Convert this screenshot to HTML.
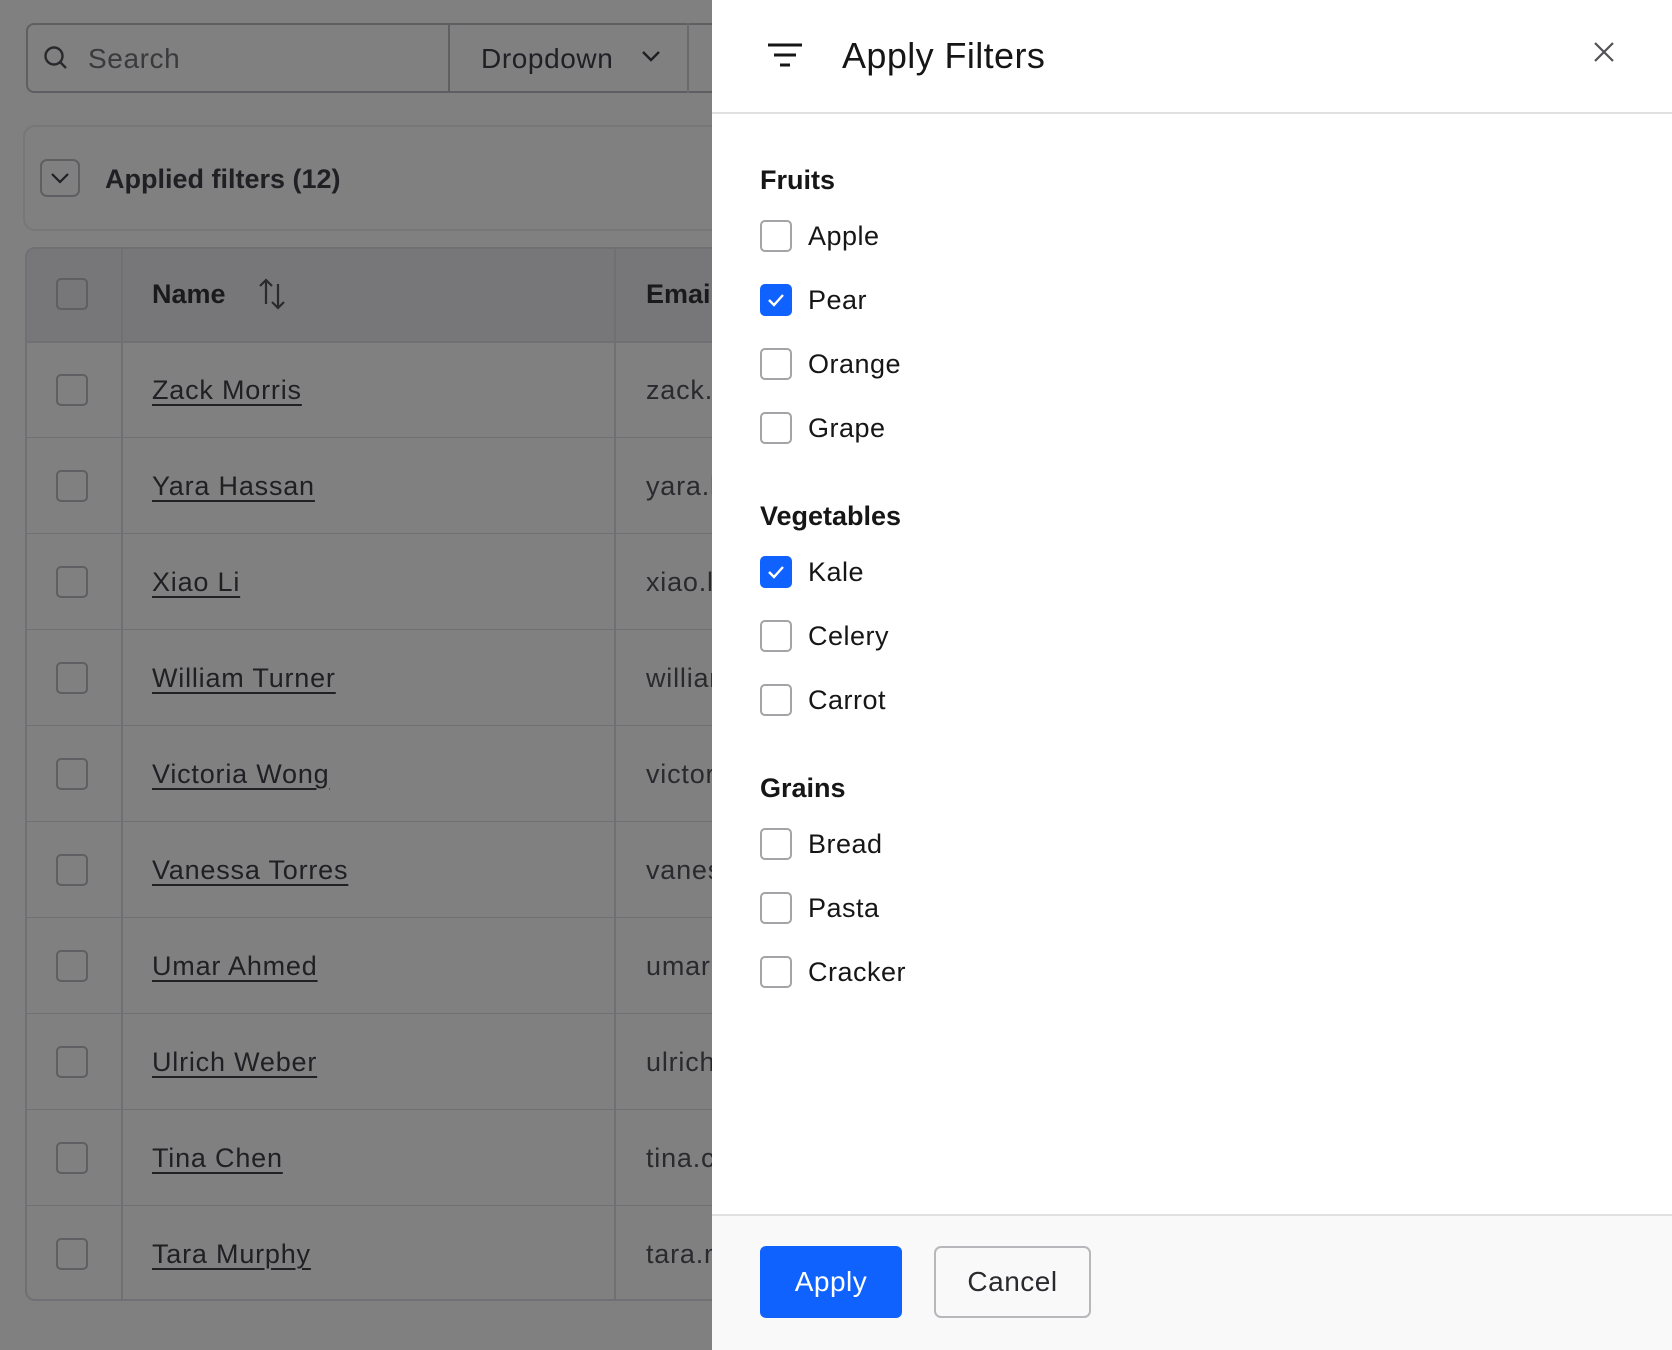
<!DOCTYPE html>
<html><head><meta charset="utf-8"><style>
*{box-sizing:border-box;margin:0;padding:0}
body{width:1672px;height:1350px;overflow:hidden;background:#808080;font-family:"Liberation Sans",sans-serif;position:relative;color:#1f1f24}
.abs{position:absolute}
.cb{position:absolute;width:32px;height:32px;border:2px solid #5f5f63;border-radius:5px}
.name{position:absolute;left:152px;font-size:27px;letter-spacing:0.8px;color:#1f1f24;text-decoration:underline;text-underline-offset:5px;text-decoration-thickness:2px}
.em{position:absolute;left:646px;font-size:27px;letter-spacing:0.8px;color:#2a2a2e}
.row{position:absolute;left:26px;width:700px;height:1px;background:#707074}
.panel{position:absolute;left:712px;top:0;width:960px;height:1350px;background:#fff}
.pcb{position:absolute;left:48px;width:32px;height:32px;border:2px solid #a3a3a8;border-radius:5px;background:#fff}
.pcb.on{background:#0f62fe;border-color:#0f62fe}
.lab{position:absolute;left:96px;font-size:27px;letter-spacing:0.5px;color:#161616}
.h{position:absolute;left:48px;font-size:27px;font-weight:bold;color:#161616}
</style></head><body>
<div class="abs" style="left:26px;top:23px;width:720px;height:70px;border:2px solid #5f5f63;border-radius:8px"></div>
<div class="abs" style="left:448px;top:23px;width:2px;height:70px;background:#5f5f63"></div>
<div class="abs" style="left:687px;top:23px;width:2px;height:70px;background:#6a6a6e"></div>
<svg class="abs" style="left:42px;top:44px" width="28" height="28" viewBox="0 0 28 28"><circle cx="12" cy="12" r="8.5" fill="none" stroke="#2a2a2e" stroke-width="2.4"/><path d="M18 18l6 6" stroke="#2a2a2e" stroke-width="2.4"/></svg>
<div class="abs" style="left:88px;top:43px;font-size:28px;letter-spacing:0.6px;color:#3a3a3e">Search</div>
<div class="abs" style="left:481px;top:43px;font-size:28px;letter-spacing:0.6px;color:#1f1f24">Dropdown</div>
<svg class="abs" style="left:640px;top:48px" width="22" height="16" viewBox="0 0 22 16"><path d="M3 4l8 8 8-8" fill="none" stroke="#1f1f24" stroke-width="2.4"/></svg>
<div class="abs" style="left:23px;top:125px;width:720px;height:106px;border:2px solid #777;border-radius:12px"></div>
<div class="abs" style="left:40px;top:159px;width:40px;height:38px;border:2px solid #5f5f63;border-radius:7px"></div>
<svg class="abs" style="left:48px;top:168px" width="24" height="20" viewBox="0 0 24 20"><path d="M4 6l8 8 8-8" fill="none" stroke="#1f1f24" stroke-width="2.2"/></svg>
<div class="abs" style="left:105px;top:164px;font-size:27px;font-weight:bold;color:#1f1f24">Applied filters (12)</div>
<div class="abs" style="left:25px;top:247px;width:720px;height:1054px;border:2px solid #707074;border-radius:10px"></div>
<div class="abs" style="left:27px;top:249px;width:700px;height:92px;background:#777779;border-radius:8px 0 0 0"></div>
<div class="abs" style="left:121px;top:247px;width:2px;height:1054px;background:#707074"></div>
<div class="abs" style="left:614px;top:247px;width:2px;height:1054px;background:#707074"></div>
<div class="row" style="top:341px;height:2px"></div>
<div class="cb" style="left:56px;top:278px"></div>
<div class="abs" style="left:152px;top:279px;font-size:27px;font-weight:bold;color:#1a1a1e">Name</div>
<svg class="abs" style="left:256px;top:276px" width="34" height="36" viewBox="0 0 34 36"><path d="M10 28V4M4 10l6-6 6 6M22 8v24M16 26l6 6 6-6" fill="none" stroke="#2a2a2e" stroke-width="2.2"/></svg>
<div class="abs" style="left:646px;top:279px;font-size:27px;font-weight:bold;color:#1a1a1e">Email</div>

<div class="cb" style="left:56px;top:374px"></div><div class="name" style="top:375px">Zack Morris</div><div class="em" style="top:375px">zack.morris</div><div class="row" style="top:437px"></div>
<div class="cb" style="left:56px;top:470px"></div><div class="name" style="top:471px">Yara Hassan</div><div class="em" style="top:471px">yara.hassan</div><div class="row" style="top:533px"></div>
<div class="cb" style="left:56px;top:566px"></div><div class="name" style="top:567px">Xiao Li</div><div class="em" style="top:567px">xiao.li</div><div class="row" style="top:629px"></div>
<div class="cb" style="left:56px;top:662px"></div><div class="name" style="top:663px">William Turner</div><div class="em" style="top:663px">william</div><div class="row" style="top:725px"></div>
<div class="cb" style="left:56px;top:758px"></div><div class="name" style="top:759px">Victoria Wong</div><div class="em" style="top:759px">victoria</div><div class="row" style="top:821px"></div>
<div class="cb" style="left:56px;top:854px"></div><div class="name" style="top:855px">Vanessa Torres</div><div class="em" style="top:855px">vanessa</div><div class="row" style="top:917px"></div>
<div class="cb" style="left:56px;top:950px"></div><div class="name" style="top:951px">Umar Ahmed</div><div class="em" style="top:951px">umar</div><div class="row" style="top:1013px"></div>
<div class="cb" style="left:56px;top:1046px"></div><div class="name" style="top:1047px">Ulrich Weber</div><div class="em" style="top:1047px">ulrich</div><div class="row" style="top:1109px"></div>
<div class="cb" style="left:56px;top:1142px"></div><div class="name" style="top:1143px">Tina Chen</div><div class="em" style="top:1143px">tina.chen</div><div class="row" style="top:1205px"></div>
<div class="cb" style="left:56px;top:1238px"></div><div class="name" style="top:1239px">Tara Murphy</div><div class="em" style="top:1239px">tara.murphy</div>

<div class="panel">
 <svg class="abs" style="left:54px;top:42px" width="38" height="28" viewBox="0 0 38 28"><path d="M2 3h34M8 13h22M14 23h10" stroke="#161616" stroke-width="3"/></svg>
 <div class="abs" style="left:130px;top:35px;font-size:36px;letter-spacing:0.4px;color:#161616">Apply Filters</div>
 <svg class="abs" style="left:880px;top:40px" width="24" height="24" viewBox="0 0 24 24"><path d="M3 3l18 18M21 3L3 21" stroke="#525256" stroke-width="2.2"/></svg>
 <div class="abs" style="left:0;top:112px;width:960px;height:2px;background:#e0e0e3"></div>

 <div class="h" style="top:165px">Fruits</div>
 <div class="pcb" style="top:220px"></div><div class="lab" style="top:221px">Apple</div>
 <div class="pcb on" style="top:284px"><svg width="28" height="28" viewBox="0 0 28 28"><path d="M7 14l5 5 9-10" fill="none" stroke="#fff" stroke-width="2.4"/></svg></div><div class="lab" style="top:285px">Pear</div>
 <div class="pcb" style="top:348px"></div><div class="lab" style="top:349px">Orange</div>
 <div class="pcb" style="top:412px"></div><div class="lab" style="top:413px">Grape</div>

 <div class="h" style="top:501px">Vegetables</div>
 <div class="pcb on" style="top:556px"><svg width="28" height="28" viewBox="0 0 28 28"><path d="M7 14l5 5 9-10" fill="none" stroke="#fff" stroke-width="2.4"/></svg></div><div class="lab" style="top:557px">Kale</div>
 <div class="pcb" style="top:620px"></div><div class="lab" style="top:621px">Celery</div>
 <div class="pcb" style="top:684px"></div><div class="lab" style="top:685px">Carrot</div>

 <div class="h" style="top:773px">Grains</div>
 <div class="pcb" style="top:828px"></div><div class="lab" style="top:829px">Bread</div>
 <div class="pcb" style="top:892px"></div><div class="lab" style="top:893px">Pasta</div>
 <div class="pcb" style="top:956px"></div><div class="lab" style="top:957px">Cracker</div>

 <div class="abs" style="left:0;top:1214px;width:960px;height:136px;background:#f9f9f9;border-top:2px solid #e0e0e3"></div>
 <div class="abs" style="left:48px;top:1246px;width:142px;height:72px;background:#0f62fe;border-radius:6px;color:#fff;font-size:28px;letter-spacing:0.5px;text-align:center;line-height:72px">Apply</div>
 <div class="abs" style="left:222px;top:1246px;width:157px;height:72px;border:2px solid #b8b8bc;border-radius:7px;background:#f9f9f9;color:#2a2a2e;font-size:28px;letter-spacing:0.5px;text-align:center;line-height:68px">Cancel</div>
</div>
</body></html>
